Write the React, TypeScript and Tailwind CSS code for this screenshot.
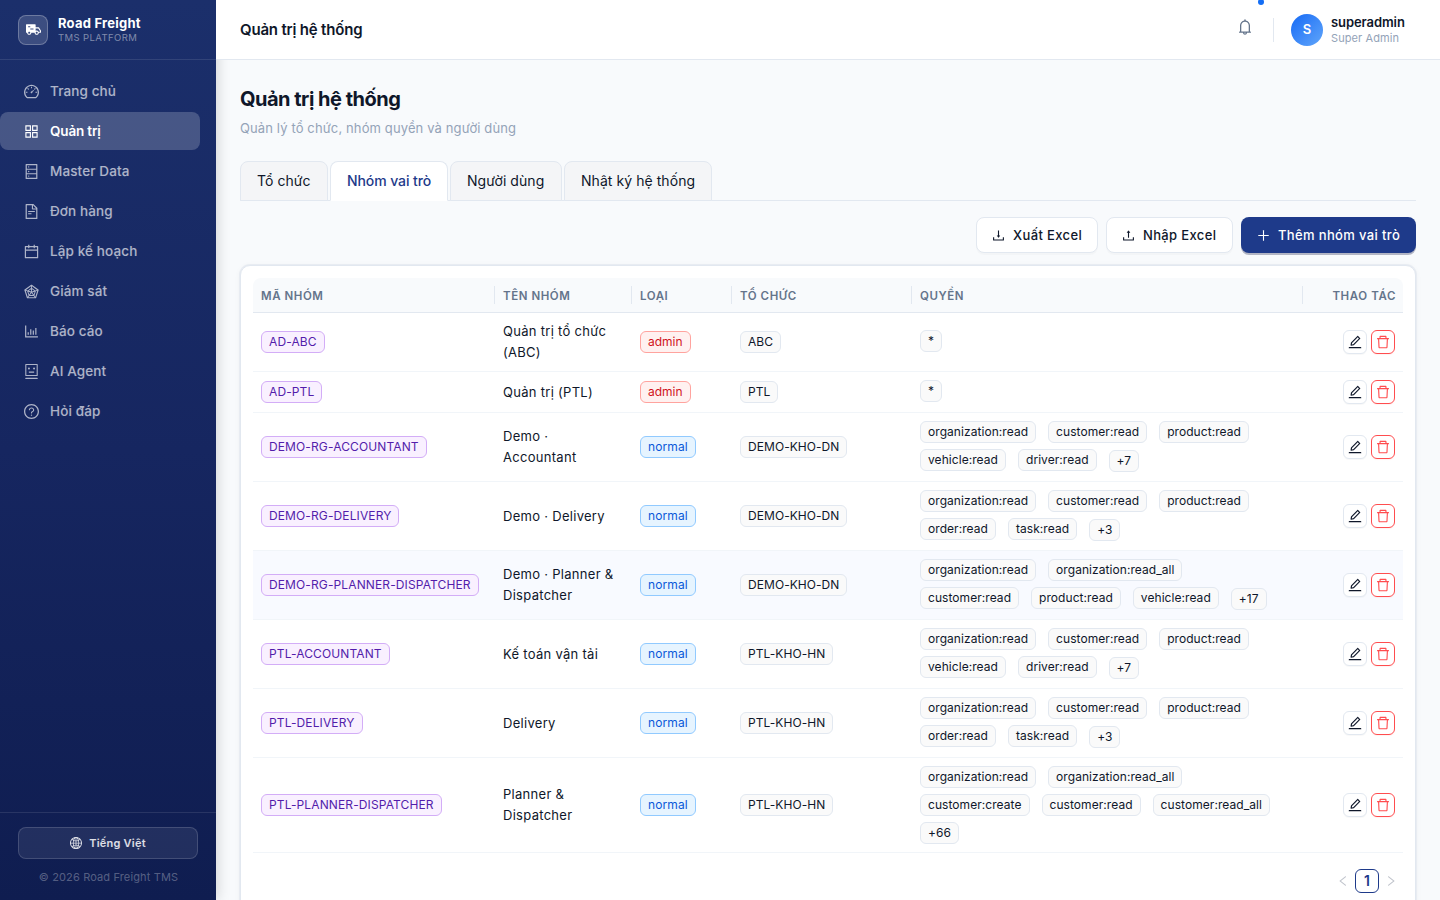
import type { ReactNode } from 'react';
import type { IconType } from 'react-icons';
import {
  AiFillTruck,
  AiOutlineAppstore,
  AiOutlineBarChart,
  AiOutlineBell,
  AiOutlineCalendar,
  AiOutlineDashboard,
  AiOutlineDatabase,
  AiOutlineDelete,
  AiOutlineDownload,
  AiOutlineEdit,
  AiOutlineFileText,
  AiOutlineGlobal,
  AiOutlineLeft,
  AiOutlinePlus,
  AiOutlineQuestionCircle,
  AiOutlineRadarChart,
  AiOutlineRight,
  AiOutlineRobot,
  AiOutlineUpload,
} from 'react-icons/ai';

const navItems: { label: string; icon: IconType; active?: boolean }[] = [
  { label: 'Trang chủ', icon: AiOutlineDashboard },
  { label: 'Quản trị', icon: AiOutlineAppstore, active: true },
  { label: 'Master Data', icon: AiOutlineDatabase },
  { label: 'Đơn hàng', icon: AiOutlineFileText },
  { label: 'Lập kế hoạch', icon: AiOutlineCalendar },
  { label: 'Giám sát', icon: AiOutlineRadarChart },
  { label: 'Báo cáo', icon: AiOutlineBarChart },
  { label: 'AI Agent', icon: AiOutlineRobot },
  { label: 'Hỏi đáp', icon: AiOutlineQuestionCircle },
];

const tabs = [
  { label: 'Tổ chức', width: 'w-[88px]' },
  { label: 'Nhóm vai trò', width: 'w-[118px]', active: true },
  { label: 'Người dùng', width: 'w-[112px]' },
  { label: 'Nhật ký hệ thống', width: 'w-[148px]' },
];

type Role = {
  code: string;
  name: string;
  kind: 'admin' | 'normal';
  org: string;
  perms: string[];
  more?: string;
  moreOnOwnLine?: boolean;
  height: string;
  hovered?: boolean;
};

const roles: Role[] = [
  { code: 'AD-ABC', name: 'Quản trị tổ chức (ABC)', kind: 'admin', org: 'ABC', perms: ['*'], height: 'h-[59px]' },
  { code: 'AD-PTL', name: 'Quản trị (PTL)', kind: 'admin', org: 'PTL', perms: ['*'], height: 'h-[41px]' },
  {
    code: 'DEMO-RG-ACCOUNTANT',
    name: 'Demo · Accountant',
    kind: 'normal',
    org: 'DEMO-KHO-DN',
    perms: ['organization:read', 'customer:read', 'product:read', 'vehicle:read', 'driver:read'],
    more: '+7',
    height: 'h-[69px]',
  },
  {
    code: 'DEMO-RG-DELIVERY',
    name: 'Demo · Delivery',
    kind: 'normal',
    org: 'DEMO-KHO-DN',
    perms: ['organization:read', 'customer:read', 'product:read', 'order:read', 'task:read'],
    more: '+3',
    height: 'h-[69px]',
  },
  {
    code: 'DEMO-RG-PLANNER-DISPATCHER',
    name: 'Demo · Planner & Dispatcher',
    kind: 'normal',
    org: 'DEMO-KHO-DN',
    perms: ['organization:read', 'organization:read_all', 'customer:read', 'product:read', 'vehicle:read'],
    more: '+17',
    height: 'h-[69px]',
    hovered: true,
  },
  {
    code: 'PTL-ACCOUNTANT',
    name: 'Kế toán vận tải',
    kind: 'normal',
    org: 'PTL-KHO-HN',
    perms: ['organization:read', 'customer:read', 'product:read', 'vehicle:read', 'driver:read'],
    more: '+7',
    height: 'h-[69px]',
  },
  {
    code: 'PTL-DELIVERY',
    name: 'Delivery',
    kind: 'normal',
    org: 'PTL-KHO-HN',
    perms: ['organization:read', 'customer:read', 'product:read', 'order:read', 'task:read'],
    more: '+3',
    height: 'h-[69px]',
  },
  {
    code: 'PTL-PLANNER-DISPATCHER',
    name: 'Planner & Dispatcher',
    kind: 'normal',
    org: 'PTL-KHO-HN',
    perms: ['organization:read', 'organization:read_all', 'customer:create', 'customer:read', 'customer:read_all'],
    more: '+66',
    moreOnOwnLine: true,
    height: 'h-[95px]',
  },
];

const headers = ['Mã nhóm', 'Tên nhóm', 'Loại', 'Tổ chức', 'Quyền'];

const tones = {
  purple: 'border-[#d3adf7] bg-[#f9f0ff] text-[#531dab] tracking-[0.12px]',
  red: 'border-[#ffa39e] bg-[#fff1f0] text-[#cf1322]',
  blue: 'border-[#91caff] bg-[#e6f4ff] text-[#0958d9] tracking-[0.1px]',
  gray: 'border-[#e2e8f0] bg-[#fafafa] text-[#0f172a] tracking-[0.06px]',
};

/** Ant Design glyph without the 64-unit margin that the icon pack leaves around it. */
function Glyph({ icon: Icon, size }: { icon: IconType; size: number }) {
  return <Icon size={size} viewBox="64 64 896 896" className="shrink-0" />;
}

function Tag({ tone, children }: { tone: keyof typeof tones; children: ReactNode }) {
  return (
    <span className={`inline-flex h-[22px] items-center whitespace-nowrap rounded-md border px-[7px] text-xs leading-5 ${tones[tone]}`}>
      {children}
    </span>
  );
}

function Sidebar() {
  return (
    <aside className="z-10 flex w-[216px] shrink-0 flex-col bg-linear-to-b from-[#1b2f6b] via-[#162660] to-[#0f1d50] shadow-[2px_0_12px_rgba(0,0,0,0.15)]">
      <div className="flex h-[60px] shrink-0 items-center gap-2.5 border-b border-white/10 px-[18px]">
        <div className="flex size-[30px] items-center justify-center rounded-lg border border-white/25 bg-white/15 text-white">
          <Glyph icon={AiFillTruck} size={15} />
        </div>
        <div className="pb-px">
          <div className="text-[13px] font-bold leading-4 tracking-[0.24px] text-white">Road Freight</div>
          <div className="text-[9.5px] leading-[13px] tracking-[0.4px] text-white/45">TMS PLATFORM</div>
        </div>
      </div>
      <nav className="flex flex-1 flex-col gap-0.5 pt-3">
        {navItems.map(({ label, icon, active }) => (
          <a
            key={label}
            className={`mr-4 flex h-[38px] items-center gap-[11px] rounded-lg pl-6 text-[13.5px] ${
              active ? 'bg-white/20 font-semibold tracking-[-0.15px] text-white' : 'font-medium tracking-[0.12px] text-white/65'
            }`}
          >
            <Glyph icon={icon} size={15} />
            <span>{label}</span>
          </a>
        ))}
      </nav>
      <div className="flex h-[88px] shrink-0 flex-col border-t border-white/10 px-[18px] pt-3.5">
        <button className="flex h-8 items-center justify-center gap-[7px] rounded-lg border border-white/15 bg-white/8 text-[11px] font-semibold tracking-[0.22px] text-white/85">
          <Glyph icon={AiOutlineGlobal} size={12} />
          Tiếng Việt
        </button>
        <div className="mt-2.5 pl-px text-center text-[11px] leading-4 tracking-[0.14px] text-white/30">© 2026 Road Freight TMS</div>
      </div>
    </aside>
  );
}

function TopBar() {
  return (
    <header className="relative z-20 flex h-[60px] shrink-0 items-center justify-between border-b border-[#e2e8f0] bg-white pr-[35px] pl-6">
      <div className="pt-0.5 text-[15px] font-semibold tracking-[-0.18px] text-[#0f172a]">Quản trị hệ thống</div>
      <div className="flex items-center">
        <div className="mb-1.5 text-[#64748b]">
          <Glyph icon={AiOutlineBell} size={16} />
        </div>
        <span className="absolute -top-px right-[176px] size-1.5 rounded-full bg-[#146ef5]" />
        <div className="ml-5 h-6 w-px bg-[#e2e8f0]" />
        <div className="ml-[17px] flex size-8 items-center justify-center rounded-full bg-linear-135 from-[#1269f5] to-[#60a5fa] text-[13px] font-semibold text-white">
          S
        </div>
        <div className="ml-2 w-[74px] whitespace-nowrap">
          <div className="text-[13px] font-semibold leading-4 tracking-[-0.08px] text-[#0f172a]">superadmin</div>
          <div className="text-[11px] leading-4 tracking-[0.1px] text-[#94a3b8]">Super Admin</div>
        </div>
      </div>
    </header>
  );
}

function RoleTable() {
  return (
    <table className="w-full table-fixed border-separate border-spacing-0 text-[13px] text-[#0f172a]">
      <colgroup>
        <col className="w-[242px]" />
        <col className="w-[137px]" />
        <col className="w-[100px]" />
        <col className="w-[180px]" />
        <col className="w-[391px]" />
        <col className="w-[100px]" />
      </colgroup>
      <thead>
        <tr className="h-[35px] text-[11.5px] uppercase leading-4 tracking-[0.55px] text-[#64748b]">
          {headers.map((h, i) => (
            <th key={h} className={`border-b border-[#e2e8f0] bg-[#f8fafc] p-0 text-left font-semibold ${i === 0 ? 'rounded-tl-lg' : ''}`}>
              <div className="flex h-[18px] items-center border-r border-[#e2e8f0] pt-0.5 pl-2">{h}</div>
            </th>
          ))}
          <th className="rounded-tr-lg border-b border-[#e2e8f0] bg-[#f8fafc] p-0 text-right font-semibold">
            <div className="flex h-[18px] items-center justify-end pt-0.5 pr-[7px] tracking-[0.6px]">Thao tác</div>
          </th>
        </tr>
      </thead>
      <tbody>
        {roles.map((r) => (
          <tr
            key={r.code}
            className={`${r.height} [&>td]:border-b [&>td]:border-[#f1f5f9] [&>td]:px-2 [&>td]:py-0 [&>td]:align-middle ${
              r.hovered ? 'bg-[#f8faff]' : 'bg-white'
            }`}
          >
            <td>
              <div className="flex">
                <Tag tone="purple">{r.code}</Tag>
              </div>
            </td>
            <td>
              <div className="w-[118px] leading-[21px] tracking-[0.29px]">{r.name}</div>
            </td>
            <td>
              <div className="flex">
                <Tag tone={r.kind === 'admin' ? 'red' : 'blue'}>{r.kind}</Tag>
              </div>
            </td>
            <td>
              <div className="flex">
                <Tag tone="gray">{r.org}</Tag>
              </div>
            </td>
            <td>
              <div className="flex flex-wrap gap-1">
                {r.perms.map((p) => (
                  <div key={p} className="mr-2 flex h-6 items-start">
                    <Tag tone="gray">{p}</Tag>
                  </div>
                ))}
                {r.more && (
                  <div className={`flex items-center ${r.moreOnOwnLine ? 'h-[22px]' : 'h-6'}`}>
                    <Tag tone="gray">{r.more}</Tag>
                  </div>
                )}
              </div>
            </td>
            <td>
              <div className="flex justify-end gap-1">
                <button className="flex size-6 items-center justify-center rounded-md border border-[#e2e8f0] bg-white shadow-[0_1px_1px_rgba(0,0,0,0.03)]">
                  <Glyph icon={AiOutlineEdit} size={14} />
                </button>
                <button className="flex size-6 items-center justify-center rounded-md border border-[#ff4d4f] bg-white text-[#ff4d4f] shadow-[0_1px_1px_rgba(255,38,5,0.06)]">
                  <Glyph icon={AiOutlineDelete} size={14} />
                </button>
              </div>
            </td>
          </tr>
        ))}
      </tbody>
    </table>
  );
}

export default function App() {
  return (
    <div className="flex h-[900px] w-[1440px] overflow-hidden bg-[#f8fafc] font-['Inter',sans-serif] text-[#0f172a]">
      <Sidebar />
      <div className="flex min-w-0 flex-1 flex-col">
        <TopBar />
        <main className="flex-1 overflow-hidden px-6 pt-6">
          <h1 className="text-xl font-bold leading-[30px] tracking-[-0.5px]">Quản trị hệ thống</h1>
          <p className="mt-1 text-[13px] leading-[21px] tracking-[0.12px] text-[#94a3b8]">Quản lý tổ chức, nhóm quyền và người dùng</p>
          <div className="mt-[22px] flex h-10 gap-0.5 border-b border-[#e2e8f0] text-sm">
            {tabs.map((t) => (
              <button
                key={t.label}
                className={`-mb-px flex h-10 items-center whitespace-nowrap rounded-t-lg border pl-4 ${t.width} ${
                  t.active
                    ? 'border-[#e2e8f0] border-b-white bg-white font-medium tracking-[-0.08px] text-[#1e3a8a]'
                    : 'border-[#e2e8f0] bg-[#f4f5f7] tracking-[0.06px]'
                }`}
              >
                {t.label}
              </button>
            ))}
          </div>
          <div className="mt-4 flex h-9 justify-end gap-2 whitespace-nowrap text-[13px] font-medium leading-5 tracking-[0.36px]">
            <button className="flex w-[122px] items-center gap-2 rounded-lg border border-[#e2e8f0] bg-white pl-[15px] shadow-[0_2px_0_rgba(0,0,0,0.02)]">
              <Glyph icon={AiOutlineDownload} size={13} />
              <span>Xuất Excel</span>
            </button>
            <button className="flex w-[127px] items-center gap-2 rounded-lg border border-[#e2e8f0] bg-white pl-[15px] shadow-[0_2px_0_rgba(0,0,0,0.02)]">
              <Glyph icon={AiOutlineUpload} size={13} />
              <span>Nhập Excel</span>
            </button>
            <button className="flex w-[175px] items-center gap-2 rounded-lg bg-[#1e3a8a] pl-4 text-white shadow-[0_2px_0_rgba(15,23,66,0.3)]">
              <Glyph icon={AiOutlinePlus} size={13} />
              <span>Thêm nhóm vai trò</span>
            </button>
          </div>
          <div className="mt-3 h-[700px] rounded-[10px] border border-[#e2e8f0] bg-white p-3 shadow-[0_0_0_1px_#e8ecf2,0_1px_6px_rgba(0,0,0,0.05)]">
            <RoleTable />
            <div className="mt-4 flex items-center justify-end text-[#c0c4cc]">
              <span className="flex size-6 items-center justify-center">
                <Glyph icon={AiOutlineLeft} size={12} />
              </span>
              <span className="flex size-6 items-center justify-center rounded-md border border-[#1e3a8a] text-sm font-semibold text-[#1e3a8a]">
                1
              </span>
              <span className="flex size-6 items-center justify-center">
                <Glyph icon={AiOutlineRight} size={12} />
              </span>
            </div>
          </div>
        </main>
      </div>
    </div>
  );
}
